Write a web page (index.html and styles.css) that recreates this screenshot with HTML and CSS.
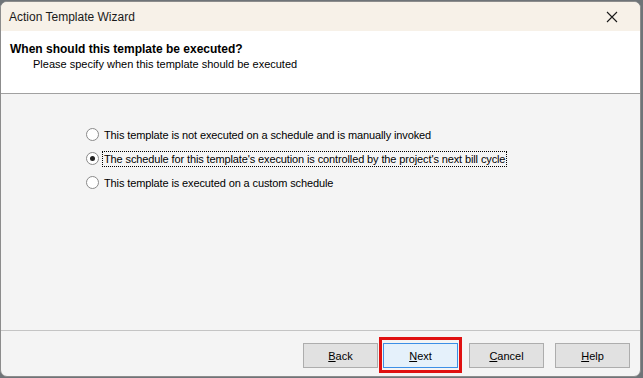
FILE: index.html
```html
<!DOCTYPE html>
<html>
<head>
<meta charset="utf-8">
<link rel="stylesheet" href="styles.css">
</head>
<body>
<div class="window">
  <div class="titlebar">
    <span class="title">Action Template Wizard</span>
    <svg class="close" width="12" height="12" viewBox="0 0 12 12"><path d="M1 1L11 11M11 1L1 11" stroke="#1a1a1a" stroke-width="1.1" fill="none"/></svg>
  </div>
  <div class="header">
    <div class="heading">When should this template be executed?</div>
    <div class="sub">Please specify when this template should be executed</div>
  </div>
  <div class="body">
    <div class="options">
      <label class="opt"><span class="radio"></span><span class="lbl">This template is not executed on a schedule and is manually invoked</span></label>
      <label class="opt"><span class="radio checked"></span><span class="lbl focus">The schedule for this template's execution is controlled by the project's next bill cycle</span></label>
      <label class="opt"><span class="radio"></span><span class="lbl">This template is executed on a custom schedule</span></label>
    </div>
  </div>
  <div class="footer">
    <button class="btn"><u>B</u>ack</button>
    <button class="btn default highlight"><u>N</u>ext</button>
    <button class="btn cancel"><u>C</u>ancel</button>
    <button class="btn"><u>H</u>elp</button>
  </div>
</div>
</body>
</html>
```
FILE: styles.css
```css
html, body {
  margin: 0;
  padding: 0;
}
body {
  width: 643px;
  height: 378px;
  background: #6f7478;
  overflow: hidden;
  font-family: "Liberation Sans", Arial, sans-serif;
}
.window {
  width: 639px;
  height: 374px;
  margin-top: 1px;
  border: 1px solid #8c8c8c;
  border-radius: 7px;
  background: #f4f4f4;
  overflow: hidden;
  display: flex;
  flex-direction: column;
}
.titlebar {
  height: 29px;
  background: #f7f1e8;
  display: flex;
  align-items: center;
  justify-content: space-between;
  padding: 0 22px 0 8px;
  flex: none;
}
.title {
  font-family: "Liberation Sans", Arial, sans-serif;
  font-size: 12px;
  color: #1a1a1a;
}
.header {
  height: 63px;
  background: #ffffff;
  border-bottom: 1px solid #a0a0a0;
  padding: 11px 0 0 9px;
  box-sizing: border-box;
  flex: none;
}
.heading {
  font-family: "Liberation Sans", Arial, sans-serif;
  font-weight: bold;
  font-size: 12px;
  line-height: 14px;
  color: #000;
}
.sub {
  font-family: "Liberation Sans", Arial, sans-serif;
  font-size: 11px;
  line-height: 13px;
  color: #000;
  margin: 2px 0 0 23px;
}
.body {
  flex: 1;
  border-bottom: 1px solid #c4c4c4;
  padding: 32px 0 0 85px;
}
.options {
  display: flex;
  flex-direction: column;
  gap: 7px;
}
.opt {
  display: flex;
  align-items: center;
  height: 17px;
  font-family: "Liberation Sans", Arial, sans-serif;
  font-size: 11px;
  letter-spacing: -0.12px;
  color: #000;
}
.radio {
  width: 11px;
  height: 11px;
  border: 1px solid #8a8a8a;
  border-radius: 50%;
  background: #fff;
  box-sizing: content-box;
  position: relative;
  flex: none;
  margin-right: 3px;
}
.radio.checked::after {
  content: "";
  position: absolute;
  left: 3px;
  top: 3px;
  width: 5px;
  height: 5px;
  border-radius: 50%;
  background: #222;
}
.lbl {
  padding: 1px 1px;
  border: 1px solid transparent;
}
.lbl.focus {
  border: 1px dotted #000;
}
.footer {
  height: 45px;
  flex: none;
  display: flex;
  align-items: flex-start;
  justify-content: flex-end;
  padding: 12px 10px 0 0;
  box-sizing: border-box;
  gap: 11px;
}
.btn {
  width: 75px;
  height: 25px;
  border: 1px solid #adadad;
  background: #e1e1e1;
  font-family: "Liberation Sans", Arial, sans-serif;
  font-size: 11px;
  color: #000;
  padding: 0;
  flex: none;
}
.btn.default {
  border-color: #3c8fe6;
  background: #e5f1fb;
  margin-left: -6px;
  position: relative;
}
.btn.highlight::after {
  content: "";
  position: absolute;
  left: -5px;
  right: -5px;
  top: -7px;
  bottom: -6px;
  border: 3px solid #e01010;
}
```
